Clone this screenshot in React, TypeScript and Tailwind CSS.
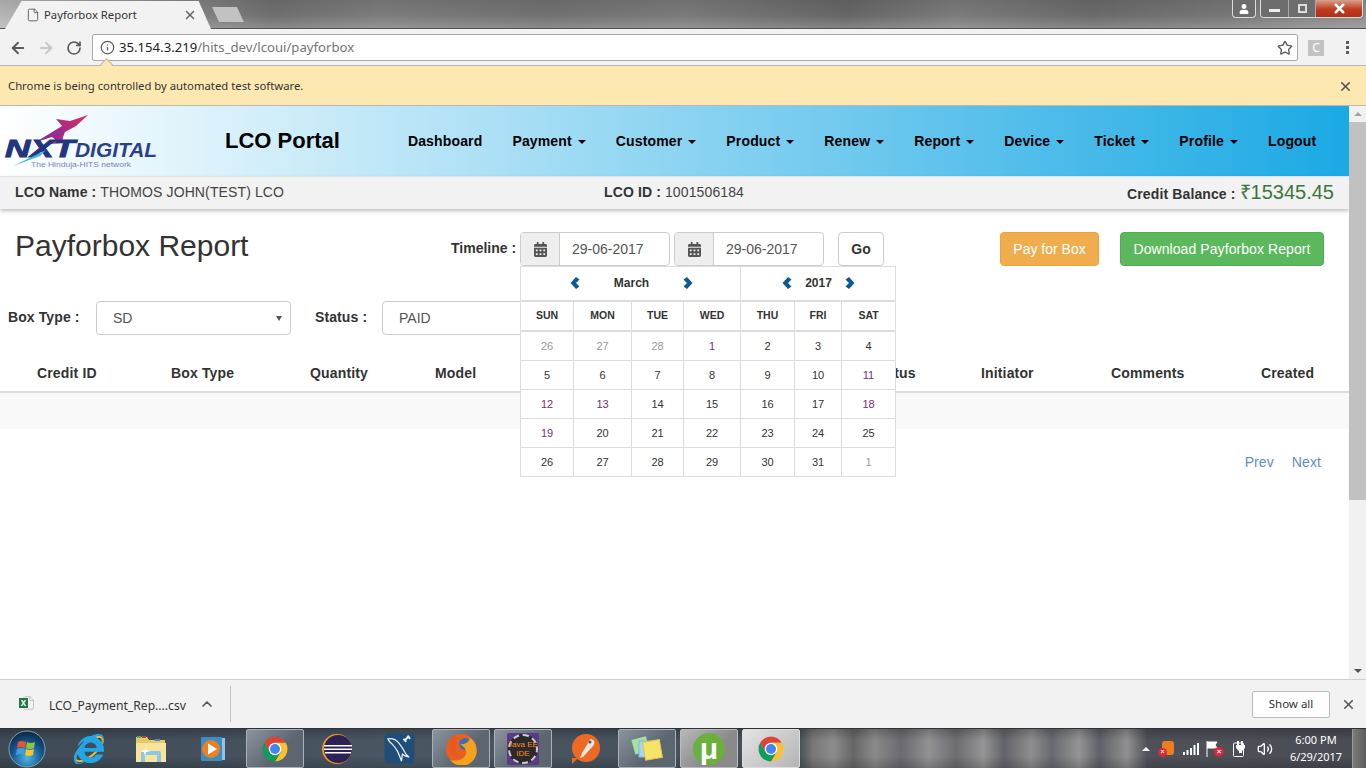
import { ArrowLeft, ArrowRight, ChevronUp, File, Info, RotateCw, Star, Volume2, X } from "lucide-react";
import { FaCalendarAlt, FaInternetExplorer, FaUser } from "react-icons/fa";

const navItems = [
    { label: "Dashboard" },
    { label: "Payment", caret: true },
    { label: "Customer", caret: true },
    { label: "Product", caret: true },
    { label: "Renew", caret: true },
    { label: "Report", caret: true },
    { label: "Device", caret: true },
    { label: "Ticket", caret: true },
    { label: "Profile", caret: true },
    { label: "Logout" },
];

const weekDays = ["SUN", "MON", "TUE", "WED", "THU", "FRI", "SAT"];

const weeks = [
    ["26", "27", "28", "1", "2", "3", "4"],
    ["5", "6", "7", "8", "9", "10", "11"],
    ["12", "13", "14", "15", "16", "17", "18"],
    ["19", "20", "21", "22", "23", "24", "25"],
    ["26", "27", "28", "29", "30", "31", "1"],
];

const dayTone = (week: number, day: number) => {
    if ((week === 0 && day < 3) || (week === 4 && day === 6)) return "text-[#999]";
    if (week === 0 && day === 3) return "text-[#7b2d7b]";
    if (week === 1 && day === 6) return "text-[#7b2d7b]";
    if (week === 2 && (day < 2 || day === 6)) return "text-[#7b2d7b]";
    if (week === 3 && day === 0) return "text-[#7b2d7b]";
    return "text-[#333]";
};

const ChromeIcon = () => (
    <svg viewBox="0 0 48 48" className="h-[30px] w-[30px]">
        <path d="M6.700 14A20 20 0 0 1 41.300 14L24 14 15.300 29Z" fill="#db4437" />
        <path d="M41.300 14A20 20 0 0 1 24 44L32.700 29 24 14Z" fill="#fbc02d" />
        <path d="M24 44A20 20 0 0 1 6.700 14L15.300 29 32.700 29Z" fill="#0f9d58" />
        <circle cx="24" cy="24" r="10" fill="#fff" />
        <circle cx="24" cy="24" r="8" fill="#4285f4" />
    </svg>
);

const WindowsOrb = () => (
    <svg viewBox="0 0 38 38" className="h-[38px] w-[38px]">
        <defs>
            <radialGradient id="orb" cx="50%" cy="75%" r="70%">
                <stop offset="0%" stopColor="#4fb4e8" />
                <stop offset="60%" stopColor="#16578f" />
                <stop offset="100%" stopColor="#0c2c4e" />
            </radialGradient>
        </defs>
        <circle cx="19" cy="19" r="18" fill="url(#orb)" stroke="#8aa0b0" strokeWidth="1" />
        <path d="M10 12q4-2 8 0l-1 6q-4-2-8 0Z" fill="#e8542c" />
        <path d="M19 12q4 2 8 0l-1 6q-4 2-8 0Z" fill="#8bc53f" />
        <path d="M9 19q4-2 8 0l-1 6q-4-2-8 0Z" fill="#3f9fe0" />
        <path d="M18 19q4 2 8 0l-1 6q-4 2-8 0Z" fill="#f6c52b" />
    </svg>
);

const IeIcon = () => (
    <div className="relative h-[30px] w-[30px]">
        <svg viewBox="0 0 30 30" className="absolute inset-0 h-[30px] w-[30px]">
            <ellipse cx="15" cy="15" rx="17" ry="7" transform="rotate(-40 15 15)" fill="none" stroke="#eebc2c" strokeWidth="2" />
        </svg>
        <FaInternetExplorer className="absolute inset-0 h-[30px] w-[30px] text-[#23a5e6]" />
    </div>
);

const FolderIcon = () => (
    <svg viewBox="0 0 32 30" className="h-[30px] w-[32px]">
        <path d="M1 3h11l2 3h16v22H1Z" fill="#e9c766" />
        <path d="M2 2h4v2H2Z" fill="#5aa84f" />
        <path d="M7 2h4v2H7Z" fill="#b8472f" />
        <path d="M20 5h5v2h-5Z" fill="#3f8fd0" />
        <path d="M1 9h30v19H1Z" fill="#f7e39a" />
        <path d="M6 28V19q0-2 2-2h16q2 0 2 2v9h-4v-7H10v7Z" fill="#8ec6e8" />
        <path d="M5 17l5-1 2-6-1 6 5 1-5 1-1 4-1-4Z" fill="#fff" />
    </svg>
);

const MediaIcon = () => (
    <svg viewBox="0 0 26 26" className="h-[26px] w-[26px]">
        <rect x="5" y="2" width="20" height="22" fill="#8fc4e6" />
        <rect x="1" y="1" width="21" height="24" rx="1" fill="#3b8dc4" />
        <circle cx="11" cy="13" r="9" fill="#ee7f22" />
        <path d="M8 7.500l9 5.500-9 5.500Z" fill="#fff" />
    </svg>
);

const EclipseIcon = () => (
    <svg viewBox="0 0 32 32" className="h-[32px] w-[32px]">
        <circle cx="16" cy="16" r="15" fill="#e9972a" />
        <circle cx="17" cy="16" r="14" fill="#2c2255" />
        <path d="M3 12h28v1.500H3ZM3 15.500h28V17H3ZM4 19h26v1.500H4Z" fill="#fff" />
    </svg>
);

const MysqlIcon = () => (
    <svg viewBox="0 0 32 32" className="h-[31px] w-[31px]">
        <rect x="0.500" y="0.500" width="31" height="31" rx="4" fill="#1f4e79" />
        <path d="M4 6q7-1 11 4t6 9q1 3 5 6-5-1-7-3l-1 7q-2-6-4-10T8 11Q5 9 4 6Z" fill="none" stroke="#e8eef4" strokeWidth="1.300" />
        <path d="M21 8l5-5M24 3l3 3M20 6l3 3" stroke="#e8eef4" strokeWidth="2" />
    </svg>
);

const FirefoxIcon = () => (
    <svg viewBox="0 0 32 32" className="h-[32px] w-[32px]">
        <circle cx="16" cy="16" r="15" fill="#e8611f" />
        <circle cx="20" cy="11" r="6" fill="#3b6fb5" />
        <path d="M31 13a15 15 0 0 1-26 14q11 2 15-4t-5-12q8 1 10-6 5 3 6 8Z" fill="#f6a01f" />
        <path d="M14 6q-4 4-3 10t8 7q-9 5-14-4T9 2Z" fill="#ea5a1f" />
    </svg>
);

const JavaEEIcon = () => (
    <div className="flex h-[32px] w-[32px] items-center justify-center rounded-[2px] bg-[#5a3a86]">
        <div className="flex h-[30px] w-[30px] flex-col items-center justify-center rounded-full border-2 border-dashed border-[#ccc] bg-[#2a2a2a] text-[8px] leading-[9px] text-[#ff8a1f]">
            <span className="whitespace-nowrap">Java EE</span>
            <span>IDE</span>
        </div>
    </div>
);

const ZapIcon = () => (
    <svg viewBox="0 0 32 32" className="h-[32px] w-[32px]">
        <circle cx="17" cy="15" r="14" fill="#ee6a22" />
        <path d="M3 25h6l-6 6Z" fill="#ee6a22" />
        <path d="M22 6a4 4 0 0 1 2 7l-10 11-3 1 2-5 6-10q1-3 3-4Z" fill="#e6e6e6" />
        <circle cx="21" cy="9" r="1.500" fill="#555" />
    </svg>
);

const StickiesIcon = () => (
    <svg viewBox="0 0 34 30" className="h-[30px] w-[34px]">
        <rect x="3" y="4" width="15" height="15" fill="#a5e29a" transform="rotate(-15 10 11)" />
        <rect x="9" y="7" width="15" height="16" fill="#a6d4f5" stroke="#7db8e8" />
        <rect x="14" y="7" width="17" height="18" fill="#f8e36a" stroke="#e4c94a" transform="rotate(-10 22 16)" />
    </svg>
);

const TorrentIcon = () => (
    <div className="flex h-[32px] w-[32px] items-center justify-center rounded-full bg-[#6ab03b] text-[30px] font-bold leading-none text-white">μ</div>
);

const Chevron = ({ flip }: { flip?: boolean }) => (
    <svg viewBox="0 0 10 12" className={`h-[12px] w-[10px] text-[#0b5a94] ${flip ? "-scale-x-100" : ""}`}>
        <path d="M6 0 9.500 2.500 6 6 9.500 9.500 6 12 0.500 6Z" fill="currentColor" />
    </svg>
);

const taskbarSlots = [
    { key: "ie", icon: <IeIcon /> },
    { key: "folder", icon: <FolderIcon /> },
    { key: "media", icon: <MediaIcon /> },
    { key: "chrome", icon: <ChromeIcon />, open: true },
    { key: "eclipse", icon: <EclipseIcon /> },
    { key: "mysql", icon: <MysqlIcon /> },
    { key: "firefox", icon: <FirefoxIcon />, open: true },
    { key: "java", icon: <JavaEEIcon />, open: true },
    { key: "zap", icon: <ZapIcon /> },
    { key: "stickies", icon: <StickiesIcon />, open: true },
    { key: "torrent", icon: <TorrentIcon />, light: true },
    { key: "chrome2", icon: <ChromeIcon />, active: true },
];

const NxtLogo = () => (
    <svg viewBox="0 0 157 70" className="h-[70px] w-[157px] shrink-0">
        <defs>
            <linearGradient id="swoosh" x1="1" y1="0" x2="0" y2="1">
                <stop offset="0%" stopColor="#e0305f" />
                <stop offset="60%" stopColor="#9c2a8e" />
                <stop offset="100%" stopColor="#7a2c9a" />
            </linearGradient>
        </defs>
        <path d="M88 9 70 15 56 13 62 20 36 36 52 31 60 37 65 26 76 20Z" fill="url(#swoosh)" />
        <path d="M64 26 50 38 62 37Z" fill="#b02a80" />
        <text x="5" y="51" fontFamily="Liberation Sans" fontSize="23" fontWeight="700" fontStyle="italic" fill="#22367f" stroke="#22367f" strokeWidth="0.900" textLength="70" lengthAdjust="spacingAndGlyphs">NXT</text>
        <text x="75" y="51" fontFamily="Liberation Sans" fontSize="21" fontStyle="italic" fontWeight="700" fill="#2b3f8c" textLength="82" lengthAdjust="spacingAndGlyphs">DIGITAL</text>
        <path d="M46 44 13 60 40 50Z" fill="#35b4e8" />
        <text x="31" y="61" fontFamily="Liberation Sans" fontSize="8" fill="#7884b8" textLength="100" lengthAdjust="spacingAndGlyphs">The Hinduja-HITS network</text>
    </svg>
);

const DateInput = () => (
    <div className="flex h-[34px] w-[150px] rounded-[4px] border border-[#ccc] bg-white">
        <div className="flex w-[39px] items-center justify-center rounded-l-[3px] border-r border-[#ccc] bg-[#eee]">
            <FaCalendarAlt className="h-[15px] w-[13px] text-[#555]" />
        </div>
        <div className="flex flex-1 items-center pl-[12px] text-[14px] text-[#555]">29-06-2017</div>
    </div>
);

const Calendar = () => (
    <div className="absolute left-0 top-[34px] z-10 w-[376px] border border-[#ddd] bg-white text-[#333]">
        <div className="grid h-[35px] grid-cols-[220px_1fr] border-b-2 border-[#ddd]">
            <div className="flex items-center justify-center gap-[34px] border-r border-[#ddd] pb-[2px] pl-[2px] text-[12px] font-bold">
                <Chevron />
                <span>March</span>
                <Chevron flip />
            </div>
            <div className="flex items-center justify-center gap-[13px] pb-[2px] pl-[1px] text-[12px] font-bold">
                <Chevron />
                <span>2017</span>
                <Chevron flip />
            </div>
        </div>
        <div className="grid h-[30px] grid-cols-[53px_58px_52px_57px_54px_47px_53px] border-b-2 border-[#ddd]">
            {weekDays.map((day) => (
                <div key={day} className="flex items-center justify-center border-r border-[#ddd] text-[10.500px] font-bold last:border-r-0">
                    {day}
                </div>
            ))}
        </div>
        {weeks.map((week, w) => (
            <div key={w} className="grid h-[29px] grid-cols-[53px_58px_52px_57px_54px_47px_53px] border-b border-[#ddd] last:h-[28px] last:border-b-0">
                {week.map((day, d) => (
                    <div key={d} className={`flex items-center justify-center border-r border-[#ddd] text-[11px] last:border-r-0 ${dayTone(w, d)}`}>
                        {day}
                    </div>
                ))}
            </div>
        ))}
    </div>
);

const ChromeFrame = () => (
    <>
        {/* title bar */}
        <div className="flex h-[29px] shrink-0 justify-between border-b border-[#555] bg-[linear-gradient(180deg,rgba(0,0,0,0.08),transparent_55%,rgba(255,255,255,0.18)),linear-gradient(90deg,#b5b5b5_0%,#8a8a8a_12%,#6f6f6f_20%,#7c7c7c_28%,#717171_40%,#7a7a7a_50%,#666_62%,#7b7b7b_70%,#6a6a6a_80%,#777_90%,#8c8c8c_100%)]">
            <div className="flex items-end pl-[5px]">
                <div className="-mb-px flex h-[28px] w-[206px] items-center bg-[#f2f2f2] pl-[21px] pr-[14px] [clip-path:polygon(0_100%,8%_0,94%_0,100%_100%)]">
                    <File className="h-[14px] w-[14px] text-[#555]" strokeWidth={1.500} />
                    <span className="ml-[4px] flex-1 font-['Noto_Sans',sans-serif] text-[11.300px] text-[#333]">Payforbox Report</span>
                    <X className="h-[14px] w-[14px] text-[#666]" strokeWidth={2.500} />
                </div>
                <div className="mb-[6px] ml-[1px] h-[15px] w-[32px] bg-[#c2c2c2] [clip-path:polygon(0_0,78%_0,100%_100%,22%_100%)]" />
            </div>
            <div className="flex items-start pr-[3px]">
                <div className="flex h-[18px] w-[24px] items-center justify-center rounded-b-[4px] border border-t-0 border-[#ddd] bg-[#6d6d6d]">
                    <FaUser className="h-[10px] w-[10px] text-white" />
                </div>
                <div className="ml-[4px] flex h-[18px] w-[103px] overflow-hidden rounded-b-[4px] border border-t-0 border-[#ddd]">
                    <div className="flex w-[28px] items-center justify-center border-r border-[#aaa] bg-[#6d6d6d]">
                        <div className="mt-[4px] h-[3px] w-[11px] bg-[#eee]" />
                    </div>
                    <div className="flex w-[27px] items-center justify-center border-r border-[#aaa] bg-[#6d6d6d]">
                        <div className="h-[9px] w-[9px] border-2 border-[#ddd]" />
                    </div>
                    <div className="flex flex-1 items-center justify-center bg-[linear-gradient(180deg,#d8a090_0%,#c23a20_55%,#b03018_100%)]">
                        <X className="h-[15px] w-[15px] text-white" strokeWidth={4} />
                    </div>
                </div>
            </div>
        </div>
        {/* toolbar */}
        <div className="flex h-[37px] shrink-0 items-center border-b border-[#b4b4b4] bg-[#f2f2f2] pt-[1px]">
            <div className="flex w-[92px] items-center pl-[9px]">
                <ArrowLeft className="h-[18px] w-[18px] text-[#5a5a5a]" strokeWidth={2.500} />
                <ArrowRight className="ml-[10px] h-[18px] w-[18px] text-[#c8c8c8]" strokeWidth={2.500} />
                <RotateCw className="ml-[11px] h-[16px] w-[16px] text-[#5a5a5a]" strokeWidth={2.500} />
            </div>
            <div className="relative flex h-[27px] w-[1206px] items-center rounded-[2px] border border-[#a9a9a9] bg-white pl-[7px] pr-[4px]">
                <Info className="h-[15px] w-[15px] text-[#5a5a5a]" strokeWidth={2} />
                <div className="ml-[4px] flex-1 font-['Noto_Sans',sans-serif] text-[13.150px] text-[#222]">
                    35.154.3.219<span className="text-[#757575]">/hits_dev/lcoui/payforbox</span>
                </div>
                <Star className="h-[16px] w-[16px] text-[#5a5a5a]" strokeWidth={2} />
                <div className="absolute left-[9px] top-[25px] h-[9px] w-[9px] rotate-45 border-l border-t border-[#b4b4b4] bg-[#fee8b1]" />
            </div>
            <div className="ml-[10px] flex h-[16px] w-[16px] items-center justify-center bg-[#c3c3c3] font-['Noto_Sans',sans-serif] text-[12px] text-white">C</div>
            <div className="ml-[22px] flex flex-col gap-[2px]">
                <span className="h-[3px] w-[3px] bg-[#5a5a5a]" />
                <span className="h-[3px] w-[3px] bg-[#5a5a5a]" />
                <span className="h-[3px] w-[3px] bg-[#5a5a5a]" />
            </div>
        </div>
        {/* automation info bar */}
        <div className="flex h-[40px] shrink-0 items-center justify-between border-b border-[#b8b8b8] bg-[#fee8b1] pl-[8px] pr-[13px] pt-[2px]">
            <span className="font-['Noto_Sans',sans-serif] text-[11.300px] text-[#333]">Chrome is being controlled by automated test software.</span>
            <X className="h-[15px] w-[15px] text-[#555]" strokeWidth={2.500} />
        </div>
    </>
);

const Page = () => (
    <div className="flex min-h-0 flex-1">
        <div className="w-[1349px] bg-white">
            {/* portal header */}
            <div className="flex h-[71px] items-start border-b border-[#e8e8e8] bg-[linear-gradient(90deg,#fff,#1ba9e4)]">
                <NxtLogo />
                <div className="ml-[68px] flex h-[68px] items-center text-[22px] font-bold text-black">LCO Portal</div>
                <nav className="ml-[68px] flex h-[70px] items-center gap-[30px] text-[14px] font-bold tracking-[0.15px] text-black">
                    {navItems.map((item) => (
                        <div key={item.label} className="flex items-center gap-[6px]">
                            {item.label}
                            {item.caret && <span className="mt-[2px] h-0 w-0 border-x-4 border-t-4 border-x-transparent border-t-black" />}
                        </div>
                    ))}
                </nav>
            </div>
            {/* account strip */}
            <div className="flex h-[32px] items-center bg-[#f2f2f2] pb-[2px] pl-[15px] pr-[15px] text-[14px] tracking-[0.12px] text-[#444] shadow-[0_2px_4px_rgba(0,0,0,0.25)]">
                <div className="w-[589px]">
                    <b className="text-[#333]">LCO Name : </b>THOMOS JOHN(TEST) LCO
                </div>
                <div className="flex-1">
                    <b className="text-[#333]">LCO ID : </b>1001506184
                </div>
                <div className="flex items-baseline">
                    <b className="text-[#333]">Credit Balance : </b>
                    <span className="ml-[4px] text-[20px] tracking-normal text-[#3c763d]">₹15345.45</span>
                </div>
            </div>
            {/* title and timeline */}
            <div className="mt-[23px] flex h-[34px] items-center">
                <h2 className="w-[451px] pb-[8px] pl-[15px] text-[30px] text-[#333]">Payforbox Report</h2>
                <div className="w-[69px] pb-[2px] text-[14px] font-bold text-[#333]">Timeline :</div>
                <div className="relative flex gap-[4px]">
                    <DateInput />
                    <DateInput />
                    <Calendar />
                </div>
                <button className="ml-[14px] h-[34px] w-[46px] rounded-[4px] border border-[#ccc] bg-white text-[14px] font-bold text-[#333]">Go</button>
                <button className="ml-[116px] h-[34px] w-[99px] rounded-[4px] border border-[#eea236] bg-[#f0ad4e] text-[14px] text-white">Pay for Box</button>
                <button className="ml-[21px] h-[34px] w-[204px] rounded-[4px] border border-[#4cae4c] bg-[#5cb85c] text-[14px] tracking-[0.08px] text-white">Download Payforbox Report</button>
            </div>
            {/* filters */}
            <div className="mt-[35px] flex h-[34px] items-center text-[14px] text-[#555]">
                <div className="w-[96px] pb-[2px] pl-[8px] font-bold tracking-[0.1px] text-[#333]">Box Type :</div>
                <div className="flex h-[34px] w-[195px] items-center justify-between rounded-[4px] border border-[#ccc] pl-[16px] pr-[8px]">
                    SD
                    <span className="h-0 w-0 border-x-[3px] border-t-[5px] border-x-transparent border-t-[#555]" />
                </div>
                <div className="ml-[24px] w-[67px] pb-[2px] font-bold tracking-[0.1px] text-[#333]">Status :</div>
                <div className="flex h-[34px] w-[195px] items-center rounded-[4px] border border-[#ccc] pl-[16px]">PAID</div>
            </div>
            {/* report table */}
            <div className="mt-[20px] grid h-[38px] grid-cols-[134px_139px_125px_437px_109px_130px_150px_1fr] items-center border-b-2 border-[#ddd] pl-[37px] pt-[1px] text-[14px] font-bold tracking-[0.15px] text-[#333]">
                <span>Credit ID</span>
                <span>Box Type</span>
                <span>Quantity</span>
                <span>Model</span>
                <span>Status</span>
                <span>Initiator</span>
                <span>Comments</span>
                <span>Created</span>
            </div>
            <div className="h-[36px] bg-[#f9f9f9]" />
            <div className="mt-[23px] flex justify-end gap-[18px] pr-[28px] text-[14px] tracking-[0.1px] text-[#5b8fc4]">
                <span>Prev</span>
                <span>Next</span>
            </div>
        </div>
        {/* page scrollbar */}
        <div className="flex w-[17px] flex-col items-center justify-between bg-[#f1f1f1]">
            <div className="w-full">
                <div className="flex h-[16px] items-center justify-center">
                    <span className="h-0 w-0 border-x-4 border-b-4 border-x-transparent border-b-[#a3a3a3]" />
                </div>
                <div className="h-[378px] bg-[#c1c1c1]" />
            </div>
            <div className="flex h-[16px] items-center justify-center">
                <span className="h-0 w-0 border-x-4 border-t-4 border-x-transparent border-t-[#505050]" />
            </div>
        </div>
    </div>
);

const DownloadBar = () => (
    <div className="flex h-[49px] shrink-0 items-center border-t border-[#d0d0d0] bg-[#f2f2f2] font-['Noto_Sans',sans-serif]">
        <div className="relative mb-[3px] ml-[19px] h-[18px] w-[17px]">
            <File className="absolute left-[2px] top-0 h-[18px] w-[15px] text-[#b5b5b5]" strokeWidth={1.200} />
            <div className="absolute left-0 top-[4px] flex h-[10px] w-[9px] items-center justify-center bg-[#1f7a45] text-[8px] font-bold text-white">X</div>
        </div>
        <span className="ml-[13px] mt-[5px] w-[138px] whitespace-nowrap text-[12.150px] text-[#333]">LCO_Payment_Rep....csv</span>
        <ChevronUp className="ml-[12px] h-[16px] w-[16px] text-[#555]" strokeWidth={2.500} />
        <div className="ml-[15px] h-[36px] w-px bg-[#c4c4c4]" />
        <div className="ml-auto flex h-[27px] w-[78px] items-center justify-center rounded-[2px] border border-[#bbb] bg-white text-[11.500px] text-[#333]">Show all</div>
        <X className="ml-[11px] mr-[10px] h-[15px] w-[15px] text-[#555]" strokeWidth={2.500} />
    </div>
);

const Taskbar = () => (
    <div className="flex h-[40px] shrink-0 items-center border-t border-[#2c3238] bg-[linear-gradient(180deg,rgba(0,0,0,0.22),transparent_30%,transparent_70%,rgba(0,0,0,0.18)),linear-gradient(90deg,#3e4a55_0%,#4a5763_30%,#444f5a_58.500%,#777_59.500%,#8c8c8c_61%,#666_62.500%,#8a8a8a_64%,#6a6a70_66%,#929292_68%,#6c6c72_70%,#959595_72%,#62626a_73.500%,#8e8e8e_75.500%,#666a70_77%,#949494_79%,#5f6068_80.500%,#909090_82.500%,#4e5158_84%,#4a4d54_100%)]">
        <div className="flex w-[58px] justify-start pl-[8px]">
            <WindowsOrb />
        </div>
        <div className="flex">
            {taskbarSlots.map((slot) => (
                <div key={slot.key} className="flex h-[39px] w-[62px] justify-center">
                    <div
                        className={`flex h-full w-[58px] items-center justify-center rounded-[2px] ${
                            slot.active
                                ? "border border-[#ddd] bg-[linear-gradient(135deg,#e4e4e4,#b4b4b4)]"
                                : slot.light
                                  ? "border border-[#bbb] bg-[linear-gradient(135deg,#b8b8b8,#8a8a8a_60%)]"
                                  : slot.open
                                    ? "border border-[#aab0b6] bg-[linear-gradient(135deg,#8c959e,#5b6671_60%)]"
                                    : ""
                        }`}
                    >
                        {slot.icon}
                    </div>
                </div>
            ))}
        </div>
        <div className="ml-auto flex h-full items-center text-white">
            <span className="h-0 w-0 border-x-4 border-b-4 border-x-transparent border-b-white" />
            <div className="relative ml-[8px] h-[16px] w-[16px]">
                <div className="absolute right-0 top-0 h-[14px] w-[12px] rounded-[3px] bg-[#ee7d1c]" />
                <div className="absolute bottom-0 left-0 flex h-[9px] w-[9px] items-center justify-center rounded-full bg-[#d9263c] text-[7px] font-bold">×</div>
            </div>
            <svg viewBox="0 0 16 12" className="ml-[9px] h-[12px] w-[16px]">
                <path d="M0 9h2v3H0ZM3.500 7h2v5h-2ZM7 5h2v7H7ZM10.500 2h2v10h-2ZM14 0h2v12h-2Z" fill="#fff" />
            </svg>
            <div className="relative ml-[7px] h-[16px] w-[16px]">
                <svg viewBox="0 0 14 16" className="h-[16px] w-[14px]">
                    <path d="M1 0v16M1 1h10l-2 3 2 3H1" fill="#fff" stroke="#fff" />
                </svg>
                <div className="absolute bottom-0 right-[-2px] flex h-[10px] w-[10px] items-center justify-center rounded-full bg-[#d9263c] text-[8px] font-bold">×</div>
            </div>
            <svg viewBox="0 0 14 16" className="ml-[11px] h-[16px] w-[14px]">
                <rect x="0.500" y="2" width="10" height="13.500" rx="1" fill="none" stroke="#fff" />
                <path d="M4 0h2v4h2V0h2v4h2v3l-3 3v2H6v-2L3 7V4h1Z" fill="#fff" />
            </svg>
            <Volume2 className="ml-[10px] h-[16px] w-[16px] text-white" />
            <div className="mb-[2px] ml-[8px] flex w-[70px] flex-col items-center font-['Noto_Sans',sans-serif] text-[11px] leading-[17px]">
                <span>6:00 PM</span>
                <span>6/29/2017</span>
            </div>
            <div className="ml-[1px] h-full w-[14px] border-l border-[#999] bg-[linear-gradient(90deg,#7a7a7a,#5c5c5c)]" />
        </div>
    </div>
);

export default function App() {
    return (
        <div className="flex h-[768px] w-[1366px] flex-col overflow-hidden font-['Liberation_Sans',Arial,sans-serif]">
            <ChromeFrame />
            <Page />
            <DownloadBar />
            <Taskbar />
        </div>
    );
}
